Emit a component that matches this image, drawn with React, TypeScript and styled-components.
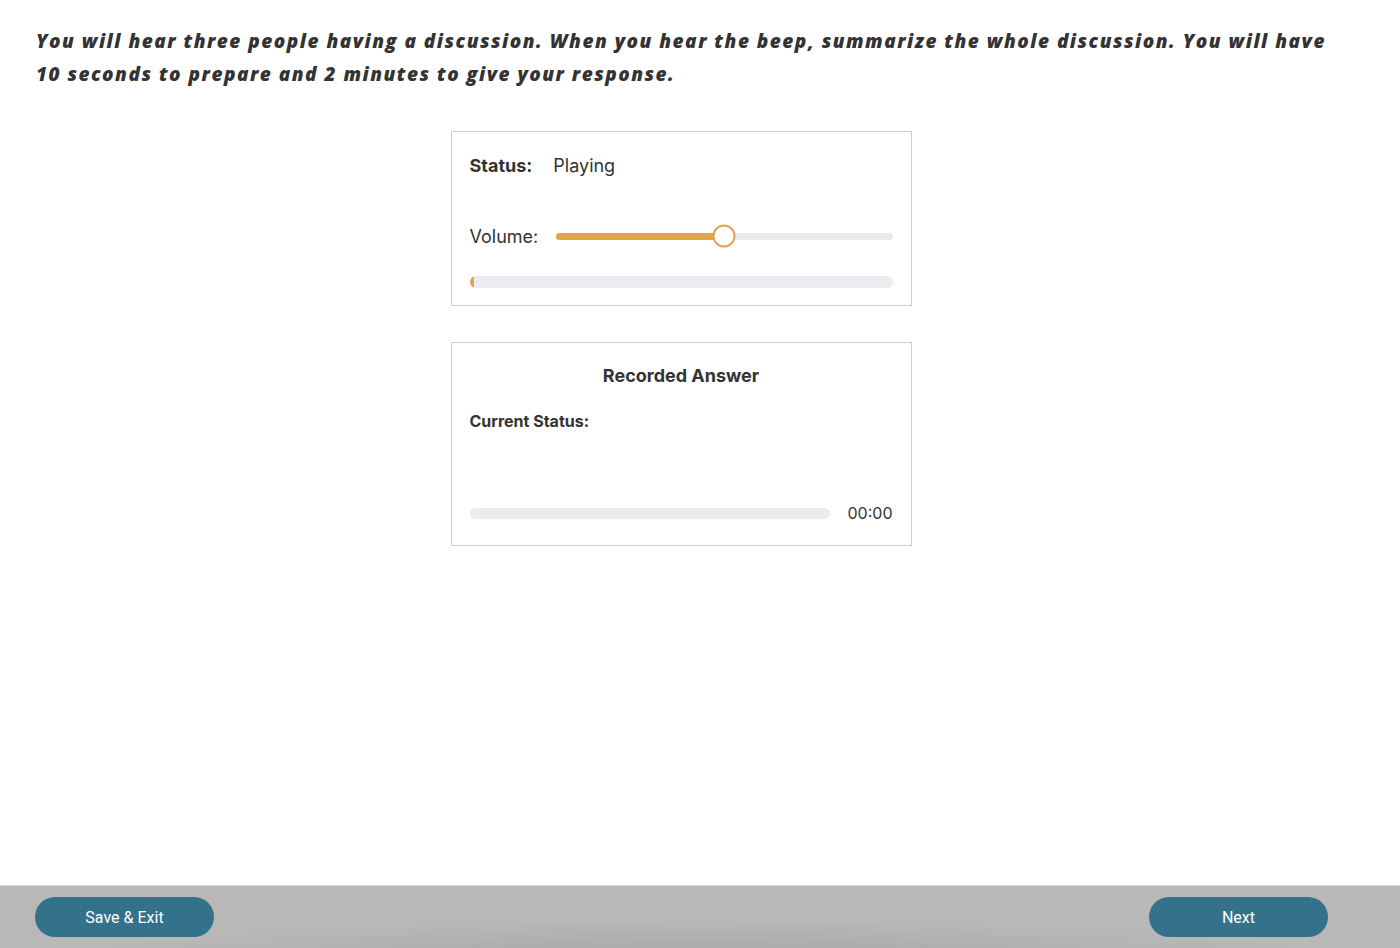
import styled, { createGlobalStyle } from 'styled-components';

const GlobalStyle = createGlobalStyle`
  html, body {
    margin: 0;
    padding: 0;
    background: #ffffff;
  }
  body {
    font-family: Inter, "Noto Sans", sans-serif;
    color: #333333;
  }
`;

const Page = styled.div`
  display: flex;
  flex-direction: column;
  min-height: 100vh;
`;

const Main = styled.main`
  flex: 1;
  display: flex;
  flex-direction: column;
`;

const Instructions = styled.p`
  margin: 0;
  padding: 25px 60px 0 36px;
  font-family: "Open Sans", Lato, sans-serif;
  font-weight: 800;
  font-style: italic;
  font-size: 19px;
  line-height: 33px;
  letter-spacing: 1.5px;
  color: #333333;
`;

const Cards = styled.div`
  display: flex;
  flex-direction: column;
  align-items: center;
  gap: 36px;
  padding: 40px 38px 0 0;
`;

const Card = styled.section<{ $bottom?: number }>`
  box-sizing: border-box;
  width: 461px;
  border: 1px solid #cbcbd6;
  padding: 18px 18px ${(p) => p.$bottom ?? 17}px;
  display: flex;
  flex-direction: column;
`;

const StatusRow = styled.div`
  display: flex;
  align-items: center;
  gap: 21px;
  height: 30px;
  font-size: 18px;
`;

const Bold = styled.span`
  font-weight: 700;
`;

const VolumeRow = styled.div`
  display: flex;
  align-items: center;
  gap: 18px;
  margin-top: 41px;
  height: 30px;
  font-size: 18px;
`;

const Slider = styled.div`
  position: relative;
  flex: 1;
  height: 7px;
  border-radius: 4px;
  background: #e9e9ee;
`;

const SliderFill = styled.div`
  height: 100%;
  border-radius: 4px;
  background: #e0a64b;
`;

const Thumb = styled.div`
  position: absolute;
  top: 50%;
  width: 19px;
  height: 19px;
  border-radius: 50%;
  background: #ffffff;
  border: 2px solid #e0a64b;
  transform: translate(-50%, -50%);
`;

const Track = styled.div<{ $height: number }>`
  flex: 1;
  height: ${(p) => p.$height}px;
  border-radius: ${(p) => p.$height / 2}px;
  background: #ebebf0;
  overflow: hidden;
  display: flex;
`;

const TrackFill = styled.div`
  height: 100%;
  background: #e0a64b;
`;

const ProgressRow = styled.div`
  display: flex;
  margin-top: 25px;
`;

const Title = styled.h2`
  margin: 0;
  text-align: center;
  font-size: 18px;
  font-weight: 700;
  line-height: 30px;
  color: #333333;
`;

const CurrentStatus = styled.div`
  margin-top: 20px;
  font-size: 16px;
  font-weight: 700;
  line-height: 20px;
`;

const TimerRow = styled.div`
  display: flex;
  align-items: center;
  gap: 18px;
  margin-top: 72px;
`;

const Time = styled.span`
  font-size: 16px;
  line-height: 20px;
  color: #333333;
`;

const Footer = styled.footer`
  box-sizing: border-box;
  height: 63px;
  display: flex;
  align-items: center;
  justify-content: space-between;
  padding: 0 72px 0 35px;
  border-top: 1px solid #d8d6d7;
  background: radial-gradient(ellipse 45% 60% at 50% 115%, #a9a6a7 0%, rgba(186, 183, 184, 0) 100%),
    #bab7b8;
`;

const Button = styled.button`
  width: 179px;
  height: 40px;
  border: none;
  border-radius: 20px;
  background: #34728c;
  color: #ffffff;
  font-family: Roboto, "Liberation Sans", sans-serif;
  font-size: 16px;
  cursor: pointer;
`;

export default function App() {
  const volume = 50;
  const played = 1;

  return (
    <Page>
      <GlobalStyle />
      <Main>
        <Instructions>
          You will hear three people having a discussion. When you hear the beep, summarize the whole
          discussion. You will have 10 seconds to prepare and 2 minutes to give your response.
        </Instructions>
        <Cards>
          <Card>
            <StatusRow>
              <Bold>Status:</Bold>
              <span>Playing</span>
            </StatusRow>
            <VolumeRow>
              <span>Volume:</span>
              <Slider>
                <SliderFill style={{ width: `${volume}%` }} />
                <Thumb style={{ left: `${volume}%` }} />
              </Slider>
            </VolumeRow>
            <ProgressRow>
              <Track $height={12}>
                <TrackFill style={{ width: `${played}%` }} />
              </Track>
            </ProgressRow>
          </Card>
          <Card $bottom={22}>
            <Title>Recorded Answer</Title>
            <CurrentStatus>Current Status:</CurrentStatus>
            <TimerRow>
              <Track $height={11} />
              <Time>00:00</Time>
            </TimerRow>
          </Card>
        </Cards>
      </Main>
      <Footer>
        <Button>Save &amp; Exit</Button>
        <Button>Next</Button>
      </Footer>
    </Page>
  );
}
